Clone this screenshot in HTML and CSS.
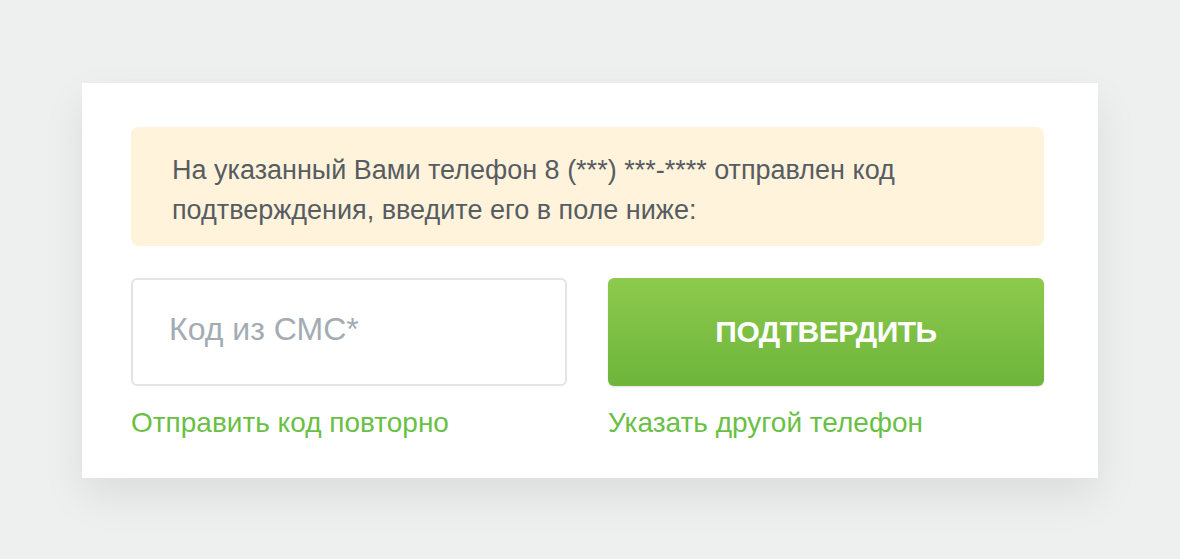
FILE: index.html
```html
<!DOCTYPE html>
<html lang="ru">
<head>
    <meta charset="UTF-8">
    <meta name="viewport" content="width=device-width, initial-scale=1.0">
    <title>Подтверждение телефона</title>
    <link rel="stylesheet" href="styles.css">
</head>
<body>
    <div class="confirm-card">
        <div class="notice">
            На указанный Вами телефон 8 (***) ***-**** отправлен код<br>
            подтверждения, введите его в поле ниже:
        </div>
        <div class="confirm-form">
            <div class="form-col">
                <input type="text" class="sms-input" placeholder="Код из СМС*">
                <a href="#" class="form-link">Отправить код повторно</a>
            </div>
            <div class="form-col">
                <button class="confirm-btn">ПОДТВЕРДИТЬ</button>
                <a href="#" class="form-link">Указать другой телефон</a>
            </div>
        </div>
    </div>
</body>
</html>
```

FILE: styles.css
```css
body {
    margin: 0;
    height: 559px;
    background-color: #eef0f0;
    font-family: 'Liberation Sans', Arial, sans-serif;
    padding-top: 83px;
    box-sizing: border-box;
}

.confirm-card {
    width: 1016px;
    margin-left: 82px;
    box-sizing: border-box;
    background-color: #ffffff;
    padding: 44px 54px 39px 49px;
    box-shadow: 0 18px 40px rgba(0, 0, 0, 0.08);
}

.notice {
    background-color: #fff3dc;
    border-radius: 8px;
    padding: 23px 30px 16px 41px;
    color: #575c62;
    font-size: 27px;
    line-height: 40px;
}

.confirm-form {
    display: flex;
    gap: 41px;
    margin-top: 32px;
}

.form-col {
    flex: 1 1 0;
    min-width: 0;
    display: flex;
    flex-direction: column;
}

.sms-input {
    width: 100%;
    min-width: 0;
    height: 108px;
    box-sizing: border-box;
    border: 2px solid #e2e4e6;
    border-radius: 6px;
    padding: 0 36px 6px;
    font-family: inherit;
    font-size: 32px;
    color: #555;
    outline: none;
}

.sms-input::placeholder {
    color: #a3abb3;
}

.confirm-btn {
    height: 108px;
    border: none;
    border-radius: 6px;
    background: linear-gradient(180deg, #8dca4d, #6db53b);
    box-shadow: 0 1px 2px rgba(0, 0, 0, 0.12);
    color: #ffffff;
    font-family: inherit;
    font-size: 30px;
    font-weight: bold;
    letter-spacing: -0.5px;
    cursor: pointer;
}

.form-link {
    margin-top: 21px;
    color: #6abf45;
    font-size: 28px;
    text-decoration: none;
}
```
